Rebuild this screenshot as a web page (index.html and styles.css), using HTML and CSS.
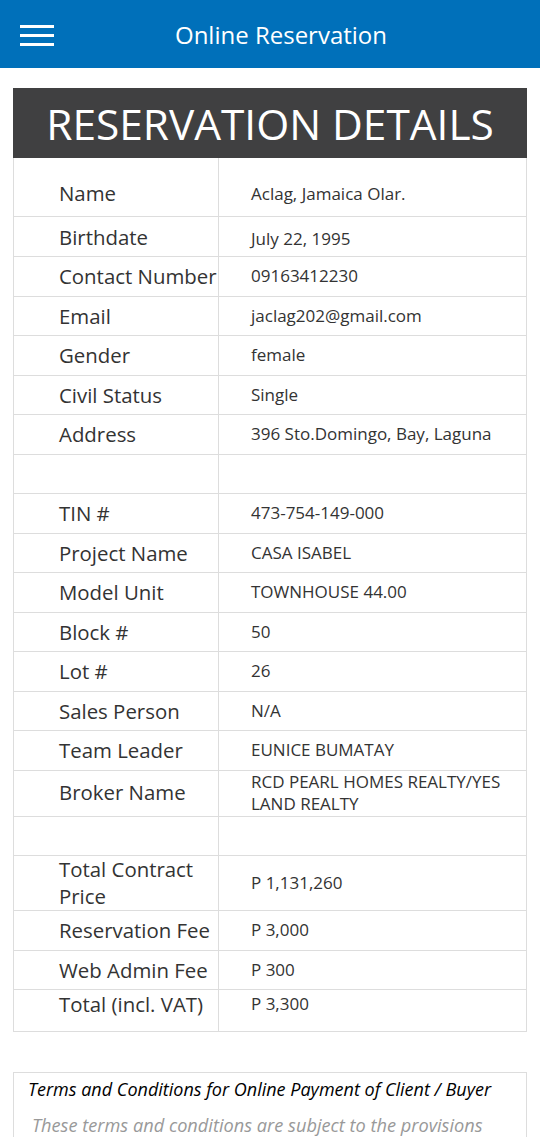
FILE: index.html
```html
<!DOCTYPE html>
<html>
<head>
<meta charset="utf-8">
<link rel="stylesheet" href="styles.css">
</head>
<body>
<header class="topbar">
  <svg class="menu" width="36" height="24" viewBox="0 0 36 24"><rect x="0" y="0" width="34" height="3" fill="#fff"/><rect x="0" y="9" width="34" height="3" fill="#fff"/><rect x="0" y="18" width="34" height="3" fill="#fff"/></svg>
  <div class="topbar-title">Online Reservation</div>
</header>
<main class="content">
  <div class="title-bar">RESERVATION DETAILS</div>
  <table class="details">
    <colgroup><col class="c1"><col class="c2"></colgroup>
    <tr class="first"><td class="lbl">Name</td><td class="val">Aclag, Jamaica Olar.</td></tr>
    <tr class="second"><td class="lbl">Birthdate</td><td class="val">July 22, 1995</td></tr>
    <tr><td class="lbl">Contact Number</td><td class="val">09163412230</td></tr>
    <tr><td class="lbl">Email</td><td class="val">jaclag202@gmail.com</td></tr>
    <tr><td class="lbl">Gender</td><td class="val">female</td></tr>
    <tr><td class="lbl">Civil Status</td><td class="val">Single</td></tr>
    <tr><td class="lbl">Address</td><td class="val">396 Sto.Domingo, Bay, Laguna</td></tr>
    <tr><td class="lbl">&nbsp;</td><td class="val"></td></tr>
    <tr><td class="lbl">TIN #</td><td class="val">473-754-149-000</td></tr>
    <tr><td class="lbl">Project Name</td><td class="val">CASA ISABEL</td></tr>
    <tr><td class="lbl">Model Unit</td><td class="val">TOWNHOUSE 44.00</td></tr>
    <tr><td class="lbl">Block #</td><td class="val">50</td></tr>
    <tr><td class="lbl">Lot #</td><td class="val">26</td></tr>
    <tr><td class="lbl">Sales Person</td><td class="val">N/A</td></tr>
    <tr><td class="lbl">Team Leader</td><td class="val">EUNICE BUMATAY</td></tr>
    <tr class="broker"><td class="lbl">Broker Name</td><td class="val">RCD PEARL HOMES REALTY/YES LAND REALTY</td></tr>
    <tr><td class="lbl">&nbsp;</td><td class="val"></td></tr>
    <tr class="tcp"><td class="lbl">Total Contract Price</td><td class="val">P 1,131,260</td></tr>
    <tr><td class="lbl">Reservation Fee</td><td class="val">P 3,000</td></tr>
    <tr><td class="lbl">Web Admin Fee</td><td class="val">P 300</td></tr>
    <tr class="last"><td class="lbl">Total (incl. VAT)</td><td class="val">P 3,300</td></tr>
  </table>
  <section class="terms">
    <div class="terms-head">Terms and Conditions for Online Payment of Client / Buyer</div>
    <div class="terms-body">These terms and conditions are subject to the provisions</div>
  </section>
</main>
</body>
</html>
```

FILE: styles.css
```css
html, body {
  margin: 0;
  padding: 0;
  background: #fff;
  font-family: "Open Sans", "Noto Sans", sans-serif;
  color: #333;
}
.topbar {
  height: 68px;
  background: #0070ba;
  display: flex;
  align-items: center;
}
.menu {
  margin-left: 20px;
  margin-top: 6px;
}
.topbar-title {
  flex: 1;
  text-align: center;
  color: #fff;
  font-size: 24px;
  margin-right: 34px;
  margin-top: 1px;
}
.content {
  padding: 20px 13px 0 13px;
}
.title-bar {
  height: 70px;
  background: #404041;
  color: #fff;
  font-size: 42.4px;
  line-height: 72px;
  text-align: center;
}
.details {
  width: 100%;
  border-collapse: collapse;
  border: 1px solid #ddd;
  border-top: none;
  table-layout: fixed;
}
.c1 { width: 205px; }
.details td {
  border: 1px solid #ddd;
  padding: 6px 0;
  vertical-align: middle;
}
.details tr:first-child td { border-top: none; }
.lbl {
  font-size: 20.4px;
  line-height: 26.5px;
  padding-left: 45px !important;
  color: #333;
}
.val {
  font-size: 17px;
  line-height: 22px;
  padding-left: 32px !important;
  padding-right: 16px !important;
  color: #333;
}
.details tr.first td {
  padding-top: 22px;
  padding-bottom: 9px;
}
.details tr.first .val {
  padding-top: 24px;
}
.details tr.second .lbl {
  padding-top: 7px;
  padding-bottom: 6px;
}
.details tr.second .val {
  padding-top: 9px;
  padding-bottom: 4px;
}
.details tr.broker td {
  padding-top: 0;
  padding-bottom: 1px;
}
.details tr.tcp .lbl {
  padding-top: 0;
  padding-bottom: 1px;
}
.details tr.last td {
  vertical-align: top;
  padding-top: 1px;
  padding-bottom: 13px;
}
.details tr.last .val {
  padding-top: 3px;
}
.terms {
  margin-top: 40px;
  border: 1px solid #ddd;
  border-bottom: none;
  padding: 3px 14px 0 14px;
}
.terms-head {
  font-style: italic;
  color: #000;
  font-size: 18px;
  line-height: 26px;
}
.terms-body {
  font-style: italic;
  color: #999;
  font-size: 18.2px;
  line-height: 26px;
  margin-top: 10px;
  padding-left: 4px;
}
```
